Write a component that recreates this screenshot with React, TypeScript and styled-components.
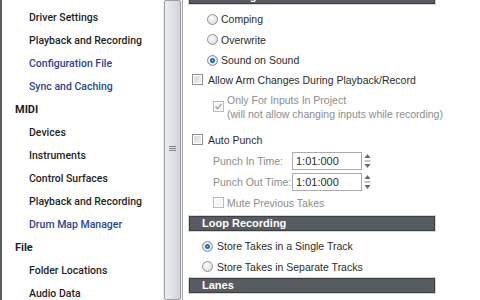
import styled, { createGlobalStyle } from "styled-components";

const GlobalStyle = createGlobalStyle`
  html, body {
    margin: 0;
    padding: 0;
    background: #ffffff;
    overflow: hidden;
  }
  * {
    box-sizing: border-box;
  }
`;

type NavItem = { label: string; kind: "item" | "link" | "group" };

const navItems: NavItem[] = [
  { label: "Driver Settings", kind: "item" },
  { label: "Playback and Recording", kind: "item" },
  { label: "Configuration File", kind: "link" },
  { label: "Sync and Caching", kind: "link" },
  { label: "MIDI", kind: "group" },
  { label: "Devices", kind: "item" },
  { label: "Instruments", kind: "item" },
  { label: "Control Surfaces", kind: "item" },
  { label: "Playback and Recording", kind: "item" },
  { label: "Drum Map Manager", kind: "link" },
  { label: "File", kind: "group" },
  { label: "Folder Locations", kind: "item" },
  { label: "Audio Data", kind: "item" },
];

const Radio = ({ checked }: { checked?: boolean }) => (
  <RadioDot $checked={checked} />
);

const CheckBox = ({ checked, disabled }: { checked?: boolean; disabled?: boolean }) => (
  <Box $disabled={disabled}>
    {checked && (
      <svg width="9" height="9" viewBox="0 0 9 9">
        <path d="M1.5 4.5 L3.6 6.8 L7.5 1.8" fill="none" stroke="#a0a0a0" strokeWidth="1.3" />
      </svg>
    )}
  </Box>
);

const Spinner = () => (
  <Spin>
    <svg width="7" height="18" viewBox="0 0 7 18">
      <path d="M3.5 2 L6.5 6 L0.5 6 Z" fill="#6a6a6a" />
      <rect x="0.5" y="8.5" width="6" height="1" fill="#8a8a8a" />
      <path d="M0.5 12 L6.5 12 L3.5 16 Z" fill="#6a6a6a" />
    </svg>
  </Spin>
);

const App = () => {
  return (
    <>
      <GlobalStyle />
      <Window>
        <Sidebar>
          <NavList>
            {navItems.map((item, i) => (
              <NavRow key={i} $kind={item.kind}>
                {item.label}
              </NavRow>
            ))}
          </NavList>
        </Sidebar>
        <ScrollTrack>
          <Thumb>
            <Grip />
          </Thumb>
        </ScrollTrack>
        <Panel>
          <SectionBar $top={-11}>Recording Mode</SectionBar>
          <OptionGroup $indent={18} $gap={3}>
            <OptionRow>
              <Radio />
              <span>Comping</span>
            </OptionRow>
            <OptionRow>
              <Radio />
              <span>Overwrite</span>
            </OptionRow>
            <OptionRow>
              <Radio checked />
              <span>Sound on Sound</span>
            </OptionRow>
          </OptionGroup>

          <CheckRow $top={1}>
            <CheckBox />
            <span>Allow Arm Changes During Playback/Record</span>
          </CheckRow>
          <SubCheck>
            <CheckBox checked disabled />
            <Muted>
              Only For Inputs In Project
              <br />
              (will not allow changing inputs while recording)
            </Muted>
          </SubCheck>

          <CheckRow $top={11}>
            <CheckBox />
            <span>Auto Punch</span>
          </CheckRow>
          <TimeField $top={2.5}>
            <FieldLabel>Punch In Time:</FieldLabel>
            <TimeInput>1:01:000</TimeInput>
            <Spinner />
          </TimeField>
          <TimeField>
            <FieldLabel>Punch Out Time:</FieldLabel>
            <TimeInput>1:01:000</TimeInput>
            <Spinner />
          </TimeField>
          <SubRow>
            <CheckBox disabled />
            <Muted>Mute Previous Takes</Muted>
          </SubRow>

          <SectionBar $top={3}>Loop Recording</SectionBar>
          <OptionGroup $indent={13} $gap={4}>
            <OptionRow>
              <Radio checked />
              <span>Store Takes in a Single Track</span>
            </OptionRow>
            <OptionRow>
              <Radio />
              <span>Store Takes in Separate Tracks</span>
            </OptionRow>
          </OptionGroup>
          <SectionBar $top={1}>Lanes</SectionBar>
        </Panel>
      </Window>
    </>
  );
};

const Window = styled.div`
  display: flex;
  width: 480px;
  height: 300px;
  overflow: hidden;
  font-family: "Liberation Sans", Arial, sans-serif;
`;

const Sidebar = styled.div`
  width: 163px;
  flex-shrink: 0;
  height: 100%;
  border-left: 2px solid #5c5c5c;
  background: #ffffff;
`;

const NavList = styled.div`
  display: flex;
  flex-direction: column;
  padding-top: 6px;
`;

const NavRow = styled.div<{ $kind: "item" | "link" | "group" }>`
  height: 23px;
  line-height: 23px;
  padding-left: ${(p) => (p.$kind === "group" ? "13px" : "27px")};
  font-family: Roboto, "Liberation Sans", sans-serif;
  font-size: ${(p) => (p.$kind === "group" ? "11px" : "10.5px")};
  font-weight: ${(p) => (p.$kind === "group" ? 700 : 500)};
  color: ${(p) => (p.$kind === "link" ? "#2d4493" : "#1f1f1f")};
  white-space: nowrap;
`;

const ScrollTrack = styled.div`
  width: 20px;
  flex-shrink: 0;
  height: 100%;
  background: #f2f2f2;
  border-right: 1px solid #a8a8a8;
  padding: 0 1px;
`;

const Thumb = styled.div`
  height: 100%;
  border: 1px solid #9c9ea2;
  border-radius: 2px;
  background: linear-gradient(to right, #eceef0 0%, #dfe2e6 45%, #cfd3d9 100%);
  display: flex;
  align-items: center;
  justify-content: center;
`;

const Grip = styled.div`
  width: 7px;
  height: 5px;
  border-top: 1px solid #7d8086;
  border-bottom: 1px solid #7d8086;
  margin-top: -4px;
  background: linear-gradient(#7d8086, #7d8086) center / 100% 1px no-repeat;
`;

const Panel = styled.div`
  flex: 1;
  height: 100%;
  padding-left: 6px;
  display: flex;
  flex-direction: column;
  font-size: 10.5px;
  color: #2c2c2c;
`;

const SectionBar = styled.div<{ $top?: number }>`
  width: 246px;
  height: 15px;
  flex-shrink: 0;
  margin-top: ${(p) => p.$top ?? 0}px;
  padding-left: 12px;
  background: #585b5f;
  border: 1px solid #3c3f42;
  box-shadow: 0 0 0 1px #d6d6d6;
  color: #ffffff;
  font-weight: 700;
  font-size: 11px;
  line-height: 13px;
  white-space: nowrap;
`;

const OptionGroup = styled.div<{ $indent: number; $gap: number }>`
  display: flex;
  flex-direction: column;
  padding-left: ${(p) => p.$indent}px;
  padding-top: 5px;

  & > div {
    gap: ${(p) => p.$gap}px;
  }
`;

const OptionRow = styled.div`
  display: flex;
  align-items: center;
  height: 20.5px;
  white-space: nowrap;
`;

const RadioDot = styled.span<{ $checked?: boolean }>`
  width: 11px;
  height: 11px;
  border-radius: 50%;
  flex-shrink: 0;
  border: 1px solid #8f9296;
  background: radial-gradient(circle at 40% 35%, #ffffff 0%, #e4e4e4 60%, #c8c8c8 100%);
  box-shadow: ${(p) =>
    p.$checked ? "inset 0 0 0 2px #eef0f2, inset 0 0 0 4px #1f6fb5" : "none"};
`;

const Box = styled.span<{ $disabled?: boolean }>`
  width: 11px;
  height: 11px;
  flex-shrink: 0;
  display: flex;
  align-items: center;
  justify-content: center;
  border: 1px solid ${(p) => (p.$disabled ? "#b9b9b9" : "#8e8f8f")};
  background: ${(p) =>
    p.$disabled ? "#f4f4f4" : "linear-gradient(135deg, #d6d6d6 0%, #f4f4f4 100%)"};
  box-shadow: inset 0 0 0 1px #ffffff;
`;

const CheckRow = styled.div<{ $top?: number }>`
  display: flex;
  align-items: center;
  gap: 5px;
  height: 16px;
  margin-top: ${(p) => p.$top ?? 0}px;
  padding-left: 3px;
  white-space: nowrap;
`;

const SubCheck = styled.div`
  display: flex;
  align-items: center;
  gap: 3px;
  padding-left: 24px;
  margin-top: 5px;
  line-height: 14px;
`;

const Muted = styled.span`
  color: #8c8c8c;
  white-space: nowrap;
`;

const TimeField = styled.div<{ $top?: number }>`
  display: flex;
  align-items: center;
  height: 21px;
  padding-left: 24px;
  margin-top: ${(p) => p.$top ?? 0}px;
`;

const FieldLabel = styled.span`
  width: 79px;
  color: #8c8c8c;
  white-space: nowrap;
`;

const TimeInput = styled.div`
  width: 70px;
  height: 18px;
  border: 1px solid #a9abb0;
  background: #ffffff;
  padding-left: 3px;
  line-height: 16px;
  font-size: 11px;
  color: #2c2c2c;
`;

const Spin = styled.div`
  margin-left: 2px;
  display: flex;
  align-items: center;
`;

const SubRow = styled.div`
  display: flex;
  align-items: center;
  gap: 3px;
  height: 21px;
  padding-left: 24px;
`;

export default App;
